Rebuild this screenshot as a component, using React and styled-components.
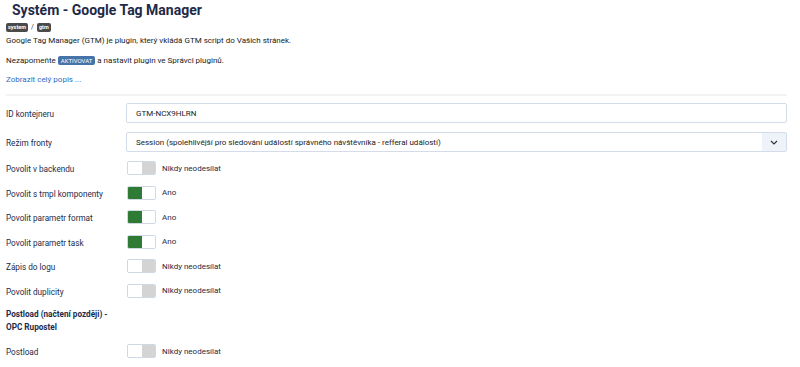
import React, { useState } from "react";
import styled, { createGlobalStyle } from "styled-components";

const GlobalStyle = createGlobalStyle`
  body {
    margin: 0;
    background: #fff;
    font-family: Roboto, "Liberation Sans", Arial, sans-serif;
  }
`;

const Page = styled.div`
  padding: 0 13px 0 6px;
  width: 800px;
  box-sizing: border-box;
`;

const Title = styled.h1`
  margin: 0;
  padding-left: 6px;
  font-size: 14px;
  line-height: 20px;
  font-weight: 700;
  color: #1d2a48;
`;

const Crumbs = styled.div`
  display: flex;
  align-items: center;
  gap: 3px;
  height: 10px;
  margin-top: 2px;
  font-size: 7px;
  color: #333;
`;

const Tag = styled.span`
  display: inline-block;
  background: ${({ $blue }) => ($blue ? "#4673a8" : "#4a4a4a")};
  color: #fff;
  font-size: ${({ $blue }) => ($blue ? "6px" : "5.5px")};
  font-weight: ${({ $blue }) => ($blue ? 400 : 700)};
  line-height: 9px;
  padding: 0 ${({ $blue }) => ($blue ? 3 : 2)}px;
  border-radius: 2px;
  vertical-align: middle;
`;

const Text = styled.p`
  margin: ${({ $mt }) => $mt || 0}px 0 0;
  font-size: 8px;
  line-height: 12px;
  color: #222;
`;

const Link = styled.a`
  display: block;
  margin-top: 7px;
  font-size: 8px;
  line-height: 12px;
  color: #2e6dc4;
  text-decoration: none;
`;

const Divider = styled.hr`
  margin: 8px 0 7px;
  border: 0;
  height: 2px;
  background: #f3f3f3;
`;

const Row = styled.div`
  display: flex;
  align-items: center;
  min-height: ${({ $h }) => $h || 24.5}px;
  margin-bottom: ${({ $mb }) => $mb || 0}px;
`;

const Label = styled.div`
  width: 120px;
  padding: ${({ $bold }) => ($bold ? "0 12px 0 0" : "3px 0 0")};
  box-sizing: border-box;
  flex-shrink: 0;
  font-size: 8.2px;
  line-height: 13px;
  color: #1c2b4a;
  font-weight: ${({ $bold }) => ($bold ? 700 : 400)};
`;

const Field = styled.div`
  flex: 1;
  display: flex;
  align-items: center;
  height: 20px;
  border: 1px solid #d3dce8;
  border-radius: 2px;
  box-sizing: border-box;
  font-size: 8px;
  color: #222;
  overflow: hidden;
`;

const FieldText = styled.span`
  flex: 1;
  padding-left: 9px;
  white-space: nowrap;
`;

const Chevron = styled.div`
  width: 24px;
  height: 100%;
  display: flex;
  align-items: center;
  justify-content: center;
  background: #eef3fa;
`;

const Toggle = styled.button`
  display: flex;
  width: 29px;
  height: 14px;
  padding: 0;
  margin-left: 1px;
  border: 1px solid #cfd8e3;
  border-radius: 2px;
  overflow: hidden;
  background: #fff;
  cursor: pointer;
`;

const Half = styled.span`
  flex: 1;
  background: ${({ $c }) => $c};
`;

const ToggleText = styled.span`
  margin-left: 6px;
  font-size: 8px;
  color: #1c2b4a;
`;

const Switch = ({ initial }) => {
  const [on, setOn] = useState(initial);
  return (
    <>
      <Toggle onClick={() => setOn(!on)}>
        <Half $c={on ? "#2f7a34" : "#fff"} />
        <Half $c={on ? "#fff" : "#d4d4d4"} />
      </Toggle>
      <ToggleText>{on ? "Ano" : "Nikdy neodesílat"}</ToggleText>
    </>
  );
};

const switches = [
  ["Povolit v backendu", false],
  ["Povolit s tmpl komponenty", true],
  ["Povolit parametr format", true],
  ["Povolit parametr task", true],
  ["Zápis do logu", false],
  ["Povolit duplicity", false],
];

export default function App() {
  return (
    <Page>
      <GlobalStyle />
      <Title>Systém - Google Tag Manager</Title>
      <Crumbs>
        <Tag>system</Tag>/<Tag>gtm</Tag>
      </Crumbs>
      <Text $mt={3}>
        Google Tag Manager (GTM) je plugin, který vkládá GTM script do Vašich stránek.
      </Text>
      <Text $mt={8}>
        Nezapomeňte <Tag $blue>AKTIVOVAT</Tag> a nastavit plugin ve Správci pluginů.
      </Text>
      <Link href="#">Zobrazit celý popis ...</Link>
      <Divider />
      <Row $h={20} $mb={9}>
        <Label>ID kontejneru</Label>
        <Field>
          <FieldText>GTM-NCX9HLRN</FieldText>
        </Field>
      </Row>
      <Row $h={20} $mb={4}>
        <Label>Režim fronty</Label>
        <Field>
          <FieldText>
            Session (spolehlivější pro sledování událostí správného návštěvníka - refferal událostí)
          </FieldText>
          <Chevron>
            <svg width="8" height="5" viewBox="0 0 8 5">
              <path d="M1 1l3 3 3-3" fill="none" stroke="#333" strokeWidth="1.2" />
            </svg>
          </Chevron>
        </Field>
      </Row>
      {switches.map(([label, on]) => (
        <Row key={label}>
          <Label>{label}</Label>
          <Switch initial={on} />
        </Row>
      ))}
      <Row $h={36}>
        <Label $bold>Postload (načtení později) - OPC Rupostel</Label>
      </Row>
      <Row $h={24}>
        <Label>Postload</Label>
        <Switch initial={false} />
      </Row>
    </Page>
  );
}
